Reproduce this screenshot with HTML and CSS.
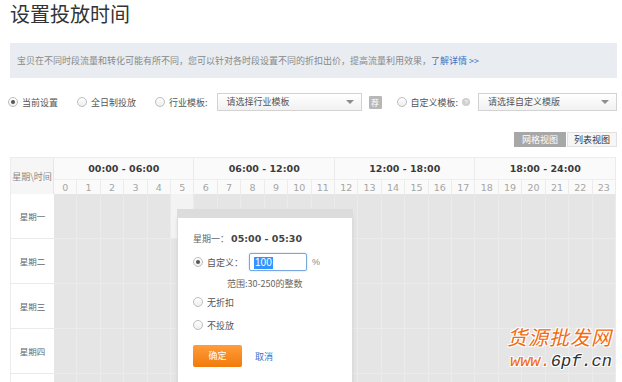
FILE: index.html
```html
<!DOCTYPE html>
<html lang="zh">
<head>
<meta charset="utf-8">
<title>设置投放时间</title>
<link rel="stylesheet" href="styles.css">
</head>
<body>
<div class="page">
  <h1 class="title">设置投放时间</h1>
  <div class="notice">宝贝在不同时段流量和转化可能有所不同，您可以针对各时段设置不同的折扣出价，提高流量利用效果，<a class="link" href="#">了解详情 &gt;&gt;</a></div>

  <div class="options">
    <label class="opt opt-first"><span class="radio checked"></span>当前设置</label>
    <label class="opt"><span class="radio"></span>全日制投放</label>
    <label class="opt"><span class="radio"></span>行业模板:</label>
    <div class="select select-industry">请选择行业模板<span class="arrow"></span></div>
    <span class="rec">荐</span>
    <label class="opt opt-custom"><span class="radio"></span>自定义模板:</label>
    <span class="help">?</span>
    <div class="select select-custom">请选择自定义模版<span class="arrow"></span></div>
  </div>

  <div class="views">
    <span class="view active">网格视图</span><span class="view">列表视图</span>
  </div>

  <div class="grid-wrap">
    <div class="grid">
      <div class="corner">星期\时间</div>
      <div class="group">00:00 - 06:00</div>
      <div class="group">06:00 - 12:00</div>
      <div class="group">12:00 - 18:00</div>
      <div class="group">18:00 - 24:00</div>
      <div class="hour">0</div><div class="hour">1</div><div class="hour">2</div><div class="hour">3</div><div class="hour">4</div><div class="hour">5</div>
      <div class="hour">6</div><div class="hour">7</div><div class="hour">8</div><div class="hour">9</div><div class="hour">10</div><div class="hour">11</div>
      <div class="hour">12</div><div class="hour">13</div><div class="hour">14</div><div class="hour">15</div><div class="hour">16</div><div class="hour">17</div>
      <div class="hour">18</div><div class="hour">19</div><div class="hour">20</div><div class="hour">21</div><div class="hour">22</div><div class="hour">23</div>

      <div class="day">星期一</div>
      <i></i><i></i><i></i><i></i><i></i><i class="sel"></i><i></i><i></i><i></i><i></i><i></i><i></i><i></i><i></i><i></i><i></i><i></i><i></i><i></i><i></i><i></i><i></i><i></i><i></i>
      <div class="day">星期二</div>
      <i></i><i></i><i></i><i></i><i></i><i></i><i></i><i></i><i></i><i></i><i></i><i></i><i></i><i></i><i></i><i></i><i></i><i></i><i></i><i></i><i></i><i></i><i></i><i></i>
      <div class="day">星期三</div>
      <i></i><i></i><i></i><i></i><i></i><i></i><i></i><i></i><i></i><i></i><i></i><i></i><i></i><i></i><i></i><i></i><i></i><i></i><i></i><i></i><i></i><i></i><i></i><i></i>
      <div class="day">星期四</div>
      <i></i><i></i><i></i><i></i><i></i><i></i><i></i><i></i><i></i><i></i><i></i><i></i><i></i><i></i><i></i><i></i><i></i><i></i><i></i><i></i><i></i><i></i><i></i><i></i>
      <div class="day"></div>
      <i></i><i></i><i></i><i></i><i></i><i></i><i></i><i></i><i></i><i></i><i></i><i></i><i></i><i></i><i></i><i></i><i></i><i></i><i></i><i></i><i></i><i></i><i></i><i></i>
    </div>

    <div class="popup">
      <div class="pop-head">星期一：<b>05:00 - 05:30</b></div>
      <div class="pop-row pop-custom">
        <span class="radio checked"></span>自定义：<span class="input"><span class="hl">100</span></span><span class="pct">%</span>
      </div>
      <div class="pop-range">范围:30-250的整数</div>
      <div class="pop-row pop-nodisc"><span class="radio"></span>无折扣</div>
      <div class="pop-row pop-off"><span class="radio"></span>不投放</div>
      <div class="pop-actions">
        <span class="btn-ok">确定</span><a class="cancel" href="#">取消</a>
      </div>
    </div>

    <div class="watermark">
      <div class="wm-cn">货源批发网</div>
      <div class="wm-url"><span class="o">www.</span>6pf.cn</div>
    </div>
  </div>
</div>
</body>
</html>
```

FILE: styles.css
```css
* { box-sizing: border-box; }
html, body { margin: 0; padding: 0; overflow: hidden; background: #fff; }
body {
  font-family: "Noto Sans CJK SC", "Liberation Sans", sans-serif;
  font-size: 9px;
  color: #666;
}
.page { width: 622px; padding: 0 5px 0 10px; }

.title {
  margin: 0;
  padding-top: 2px;
  height: 27px;
  font-size: 20px;
  line-height: 24px;
  font-weight: 400;
  color: #333;
}

.notice {
  margin-top: 16px;
  height: 35px;
  line-height: 35px;
  padding-left: 7px;
  background: #e9edf2;
  color: #888;
  font-size: 9px;
  white-space: nowrap;
}
.notice .link { color: #3a72c6; text-decoration: none; }

/* options row */
.options {
  margin-top: 15px;
  height: 18px;
  display: flex;
  align-items: center;
  white-space: nowrap;
}
.opt { display: flex; align-items: center; color: #555; margin-left: 19px; }
.opt-first { margin-left: -2px; }
.opt-custom { margin-left: 15px; }
.radio {
  width: 10px; height: 10px;
  border: 1px solid #bdbdbd;
  border-radius: 50%;
  background: linear-gradient(#fff, #eee);
  margin-right: 4px;
  position: relative;
  flex: none;
}
.radio.checked::after {
  content: "";
  position: absolute;
  left: 2px; top: 2px;
  width: 4px; height: 4px;
  border-radius: 50%;
  background: #555;
}
.select {
  position: relative;
  height: 18px;
  line-height: 16px;
  border: 1px solid #d3d3d3;
  background: linear-gradient(#fff, #f1f1f1);
  color: #555;
  padding-left: 9px;
}
.select-industry { width: 145px; margin-left: 9px; }
.select-custom { flex: 1; margin-left: 8px; }
.arrow {
  position: absolute;
  right: 7px; top: 6px;
  width: 0; height: 0;
  border-left: 4px solid transparent;
  border-right: 4px solid transparent;
  border-top: 4px solid #8c8c8c;
}
.rec {
  margin-left: 7px;
  width: 13px; height: 13px;
  background: #b7b7b7;
  color: #fff;
  font-size: 8px;
  line-height: 13px;
  text-align: center;
  border-radius: 1px;
}
.help {
  margin-left: 4px;
  width: 8px; height: 8px;
  border-radius: 50%;
  background: #cfcfcf;
  color: #fff;
  font-size: 6px;
  line-height: 8px;
  text-align: center;
  font-family: "Liberation Sans", sans-serif;
}

/* view switch */
.views {
  margin-top: 21px;
  height: 15px;
  display: flex;
  justify-content: flex-end;
}
.view {
  height: 15px;
  line-height: 13px;
  padding: 0 6px;
  font-size: 9px;
  color: #333;
  background: #f6f6f6;
  border: 1px solid #e1e1e1;
  margin-left: 1px;
  white-space: nowrap;
}
.view.active { background: #a7a7a7; color: #fff; border-color: #a7a7a7; padding: 0 7px; }

/* grid */
.grid-wrap { position: relative; margin-top: 10px; width: 606px; }
.grid {
  display: grid;
  grid-template-columns: 44px repeat(24, 1fr);
  grid-template-rows: 22px 15px repeat(5, 45px);
}
.corner {
  grid-row: 1 / span 2;
  display: flex; align-items: center; justify-content: center;
  background: #f6f6f6;
  color: #888;
  border-top: 1px solid #ececec;
  border-left: 1px solid #ececec;
  border-right: 1px solid #e6e6e6;
  white-space: nowrap;
}
.group {
  grid-column: span 6;
  display: flex; align-items: center; justify-content: center;
  background: #fafafa;
  border-top: 1px solid #ececec;
  border-right: 1px solid #ececec;
  font-family: "DejaVu Sans", sans-serif;
  font-weight: bold;
  font-size: 9.5px;
  color: #3a3a3a;
  white-space: nowrap;
}
.hour {
  display: flex; align-items: center; justify-content: center;
  background: #fafafa;
  border-top: 1px solid #efefef;
  border-right: 1px solid #ececec;
  font-family: "DejaVu Sans", sans-serif;
  font-size: 9.5px;
  color: #a5a5a5;
}
.day {
  display: flex; align-items: center; justify-content: center;
  background: #fff;
  border-left: 1px solid #ececec;
  border-bottom: 1px solid #eaeaea;
  color: #666;
  font-size: 8.5px;
}
.grid i {
  display: block;
  background: #e5e5e5;
  border-right: 1px solid #ebebeb;
  border-bottom: 1px solid #ebebeb;
}
.grid i.sel { background: #f3f3f3; }

/* popup */
.popup {
  position: absolute;
  left: 167px;
  top: 60px;
  width: 176px;
  height: 200px;
  background: #fff;
  border: 1px solid #dcdcdc;
  box-shadow: 0 -8px 0 0 #dcdcdc, 0 0 4px rgba(0,0,0,0.08);
  padding: 15px 0 0 15px;
  color: #555;
}
.pop-head { height: 12px; line-height: 12px; color: #666; white-space: nowrap; }
.pop-head b {
  font-family: "DejaVu Sans", sans-serif;
  font-size: 9.5px;
  color: #444;
  margin-left: 2px;
}
.pop-row { display: flex; align-items: center; height: 12px; white-space: nowrap; }
.pop-row .radio { margin-right: 4px; }
.pop-custom { height: 18px; margin-top: 8px; }
.input {
  margin-left: 6px;
  width: 58px; height: 18px;
  border: 1px solid #79a6df;
  border-radius: 2px;
  box-shadow: 0 0 2px rgba(80,140,220,0.4);
  padding: 2px 0 0 4px;
}
.hl {
  display: inline-block;
  background: #3393ff;
  color: #fff;
  font-family: "Liberation Sans", sans-serif;
  font-size: 10px;
  line-height: 12px;
  padding: 0 1px;
}
.pct { margin-left: 5px; color: #888; font-family: "Liberation Sans", sans-serif; font-size: 9px; }
.pop-range { margin-top: 7px; padding-left: 34px; height: 12px; line-height: 12px; color: #666; }
.pop-nodisc { margin-top: 6px; }
.pop-off { margin-top: 11px; }
.pop-actions { margin-top: 14px; display: flex; align-items: center; }
.btn-ok {
  width: 49px; height: 22px;
  line-height: 22px;
  text-align: center;
  color: #fff;
  background: linear-gradient(#ff9d3b, #f27a0a);
  border-radius: 2px;
}
.cancel { margin-left: 13px; color: #3a6fc8; text-decoration: none; }

/* watermark */
.watermark {
  position: absolute;
  right: 4px;
  top: 170px;
  width: 106px;
  text-align: right;
}
.wm-cn {
  font-family: "Noto Sans CJK SC", sans-serif;
  font-size: 20px;
  line-height: 20px;
  letter-spacing: 1px;
  color: #f26b0f;
  font-style: italic;
  text-shadow: 1px 1px 0 #fff, -1px -1px 0 #fff, 1px -1px 0 #fff, -1px 1px 0 #fff;
}
.wm-url {
  margin-top: 6px;
  font-family: "Liberation Mono", monospace;
  font-size: 17px;
  line-height: 18px;
  font-style: italic;
  color: #333;
  text-shadow: 1px 1px 0 #fff, -1px -1px 0 #fff, 1px -1px 0 #fff, -1px 1px 0 #fff;
}
.wm-url .o { color: #f26b0f; }
```
